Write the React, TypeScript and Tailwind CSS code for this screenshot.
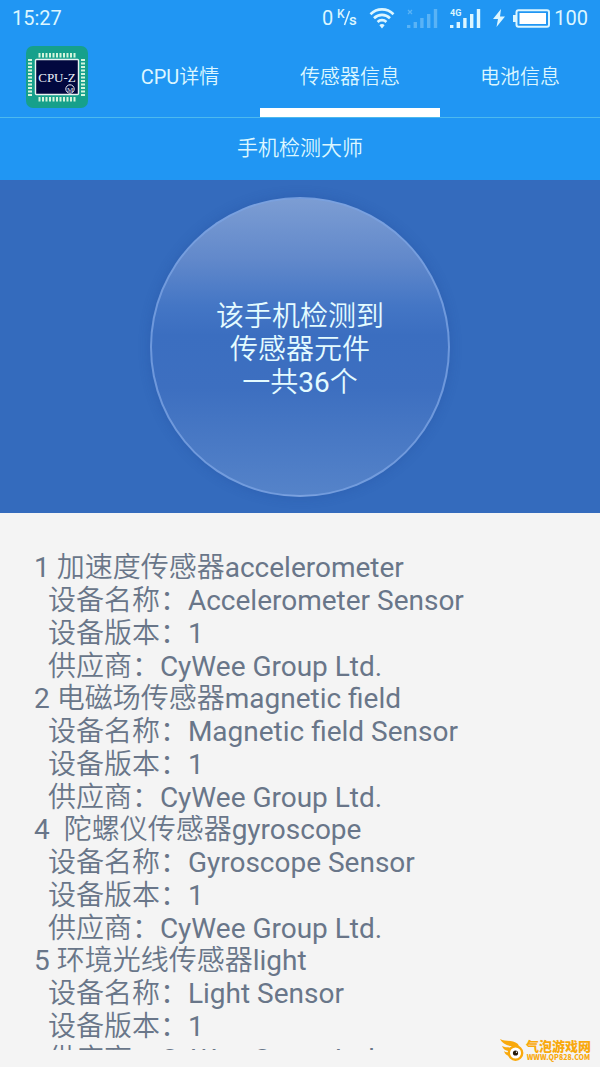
import { useState } from 'react'

interface Sensor {
  heading: string
  name: string
  version: string
  vendor: string
}

const TABS = ['CPU详情', '传感器信息', '电池信息']

const SENSORS: Sensor[] = [
  { heading: '1 加速度传感器accelerometer', name: 'Accelerometer Sensor', version: '1', vendor: 'CyWee Group Ltd.' },
  { heading: '2 电磁场传感器magnetic field', name: 'Magnetic field Sensor', version: '1', vendor: 'CyWee Group Ltd.' },
  { heading: '4  陀螺仪传感器gyroscope', name: 'Gyroscope Sensor', version: '1', vendor: 'CyWee Group Ltd.' },
  { heading: '5 环境光线传感器light', name: 'Light Sensor', version: '1', vendor: 'CyWee Group Ltd.' },
]

function WifiIcon() {
  return (
    <svg width="26" height="22" viewBox="0 0 26 22" fill="none" stroke="currentColor" strokeWidth="2.6">
      <path d="M1.5 7.2C8 .8 18 .8 24.5 7.2" />
      <path d="M5 11.2C9.5 6.8 16.5 6.8 21 11.2" />
      <path d="M8.6 15C11 12.5 15 12.5 17.4 15" />
      <path d="M13 21.5l-2.6-3.2c1.3-1.6 3.9-1.6 5.2 0z" fill="currentColor" stroke="none" />
    </svg>
  )
}

function SignalBars() {
  return (
    <g fill="currentColor">
      <rect x="0" y="16" width="3.4" height="3" />
      <rect x="6.6" y="13" width="3.4" height="6" />
      <rect x="13.2" y="9" width="3.4" height="10" />
      <rect x="20" y="5" width="3.4" height="14" />
      <rect x="26.8" y="0" width="3.4" height="19" />
    </g>
  )
}

function StatusBar() {
  return (
    <div className="flex h-9 shrink-0 items-center px-3 text-xl text-[#dcf6ff]">
      <span>15:27</span>
      <div className="ml-auto flex items-center">
        <span>0</span>
        <svg className="ml-1 overflow-visible" width="20" height="20" viewBox="0 0 20 20">
          <path d="M7.5 17L12.5 3" stroke="currentColor" strokeWidth="1.5" />
          <text x="0" y="10" fontSize="12" fontWeight="500" fill="currentColor">K</text>
          <text x="12" y="17" fontSize="15" fontWeight="500" fill="currentColor">s</text>
        </svg>
        <span className="ml-3"><WifiIcon /></span>
        <svg className="ml-3 opacity-30" width="31" height="19" viewBox="0 0 31 19">
          <SignalBars />
          <path d="M1 1l4 4M5 1l-4 4" stroke="currentColor" strokeWidth="1.3" />
        </svg>
        <svg className="ml-3 overflow-visible" width="31" height="19" viewBox="0 0 31 19">
          <SignalBars />
          <text x="0" y="7" fontSize="9" fontWeight="700" fill="currentColor">4G</text>
        </svg>
        <svg className="ml-3" width="12" height="18" viewBox="0 0 12 18" fill="currentColor">
          <path d="M8 0L0 10h5L3.5 18 12 7.5H7z" />
        </svg>
        <svg className="ml-2" width="37" height="19" viewBox="0 0 37 19" fill="currentColor">
          <path d="M0 6h3v7H0z" />
          <rect x="3.5" y="1.2" width="32.5" height="16.6" rx="2" fill="none" stroke="currentColor" strokeWidth="2" />
          <rect x="6.5" y="4" width="26.5" height="11" fill="#fff" />
        </svg>
        <span className="ml-1">100</span>
      </div>
    </div>
  )
}

const PINS = [0, 1, 2, 3, 4, 5, 6, 7, 8, 9, 10]

function AppLogo() {
  return (
    <svg width="62" height="62" viewBox="0 0 62 62">
      <rect width="62" height="62" rx="7" fill="#16a08b" />
      <g fill="#d4f5dc">
        {PINS.map((i) => (
          <g key={i}>
            <rect x={12.5 + i * 3.5} y="7" width="2" height="4.5" />
            <rect x={12.5 + i * 3.5} y="51" width="2" height="4.5" />
            <rect x="2" y={13 + i * 3.5} width="4" height="2" />
            <rect x="55" y={13 + i * 3.5} width="4" height="2" />
          </g>
        ))}
      </g>
      <rect x="9.5" y="13.5" width="43" height="35" rx="1" fill="#02083f" stroke="#e8f3f0" strokeWidth="1.4" />
      <text x="31" y="35.5" textAnchor="middle" fontSize="13" fill="#eef3fa" fontFamily="Liberation Serif, serif">CPU-Z</text>
      <circle cx="44" cy="43" r="4.2" fill="none" stroke="#e6e9f2" />
      <text x="44" y="45.5" textAnchor="middle" fontSize="7" fill="#e6e9f2" fontFamily="Liberation Serif, serif">M</text>
    </svg>
  )
}

function SiteBadge() {
  return (
    <a href="#site" aria-label="气泡游戏网" className="absolute right-[9px] bottom-[5px] flex items-center gap-[2px] font-['Noto_Sans_CJK_SC',sans-serif] text-[#f9a90c]">
      <svg width="25" height="24" viewBox="0 0 25 24">
        <path d="M1 1c5 3 12 0 18 5l1 3-7-1C8 8 3 5 1 1z" fill="currentColor" />
        <path d="M3 8c4 2 8 1 12 2l-4 3C7 13 4 11 3 8z" fill="currentColor" />
        <path d="M5 13c2 2 5 1 7 2l-2 3c-3-1-4-2-5-5z" fill="currentColor" />
        <circle cx="16.5" cy="15" r="6.7" fill="#fff" stroke="currentColor" strokeWidth="2.4" />
        <circle cx="16.5" cy="15" r="2.6" fill="#26190a" />
        <circle cx="17.5" cy="14.3" r=".7" fill="#fff" />
      </svg>
      <span className="flex flex-col items-center">
        <span className="text-[13px] leading-[15px] font-black">气泡游戏网</span>
        <span className="text-[7px] leading-[9px] font-black">WWW.QP828.COM</span>
      </span>
    </a>
  )
}

export default function App() {
  const [active, setActive] = useState(1)

  return (
    <div className="relative flex h-screen flex-col overflow-hidden bg-[#f4f4f4] font-['Roboto','Noto_Sans_CJK_SC_DemiLight','Noto_Sans_CJK_SC',sans-serif]">
      <header className="shrink-0 bg-[#2096f3] text-[#dcf6ff]">
        <StatusBar />
        <nav className="grid h-[82px] grid-cols-[100px_1fr_180px_1fr] border-b border-[#4cb9ee]">
          <div className="flex items-center pl-[26px]">
            <AppLogo />
          </div>
          {TABS.map((tab, i) => (
            <button key={tab} onClick={() => setActive(i)}
              className={`border-b-9 pt-[10px] text-xl ${i === active ? 'border-white' : 'border-transparent'}`}>
              {tab}
            </button>
          ))}
        </nav>
        <h1 className="flex h-[62px] items-center justify-center text-[21px]">手机检测大师</h1>
      </header>

      <section className="flex shrink-0 justify-center bg-[#346bbd] pt-[17px] pb-4">
        <div className="flex size-[300px] items-center justify-center rounded-full border-2 border-[#7ba3e2]/80 bg-[linear-gradient(#7c9dd3,#6289cb_20%,#4476c5_36%,#3b6ec0_46%,#3d6fc0_64%,#5583c9)] pt-1 shadow-[0_0_12px_rgba(30,70,150,0.3)]">
          <p className="text-center text-[28px] leading-[33px] text-[#e4fbff]">
            该手机检测到<br />传感器元件<br />一共36个
          </p>
        </div>
      </section>

      <main className="mb-[17px] min-h-0 flex-1 overflow-hidden px-[34px] pt-[38px] text-[28px] leading-[33px] text-[#697689]">
        <ul className="-space-y-px whitespace-pre">
          {SENSORS.map((s) => (
            <li key={s.heading}>
              <h2>{s.heading}</h2>
              <p>{`  设备名称：${s.name}`}</p>
              <p>{`  设备版本：${s.version}`}</p>
              <p>{`  供应商：${s.vendor}`}</p>
            </li>
          ))}
        </ul>
      </main>

      <SiteBadge />
    </div>
  )
}
